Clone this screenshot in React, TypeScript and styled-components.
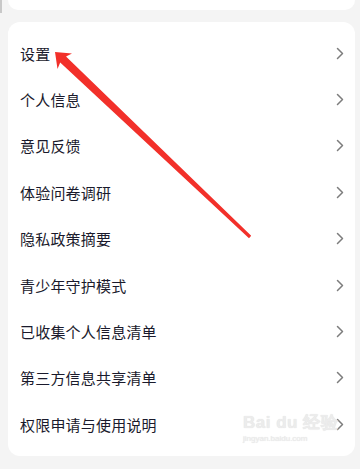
import React from "react";
import styled, { createGlobalStyle } from "styled-components";

const GlobalStyle = createGlobalStyle`
  html, body {
    margin: 0;
    padding: 0;
    background: #f4f4f4;
  }
  body {
    font-family: "Noto Sans CJK SC", "Noto Sans", sans-serif;
  }
`;

const Page = styled.div`
  position: relative;
  width: 360px;
  height: 469px;
  overflow: hidden;
  background: #f4f4f4;
  padding: 0 5px 0 8px;
  box-sizing: border-box;
  display: flex;
  flex-direction: column;
  gap: 12px;
`;

const ScrollMark = styled.div`
  position: absolute;
  left: 0;
  top: 0;
  width: 2px;
  height: 13px;
  background: #c8c8c8;
`;

const TopCard = styled.div`
  height: 10px;
  background: #ffffff;
  border-radius: 0 0 12px 12px;
`;

const Card = styled.div`
  background: #ffffff;
  border-radius: 12px;
  padding: 8px 0;
  display: flex;
  flex-direction: column;
`;

const Row = styled.div`
  height: 46.4px;
  display: flex;
  align-items: center;
  justify-content: space-between;
  padding: 0 11px 0 12px;
`;

const Label = styled.span`
  font-size: 15px;
  color: #1a1a2c;
  letter-spacing: 0.2px;
`;

const Chevron = () => (
  <svg width="8" height="13" viewBox="0 0 8 13" fill="none">
    <path d="M1.5 1.5 L6.5 6.5 L1.5 11.5" stroke="#7d7d7d" strokeWidth="1.5" strokeLinecap="round" strokeLinejoin="round" />
  </svg>
);

const Overlay = styled.svg`
  position: absolute;
  left: 0;
  top: 0;
  pointer-events: none;
`;

const Watermark = styled.div`
  position: absolute;
  left: 243px;
  top: 414px;
  color: #ececec;
  font-family: "Liberation Sans", sans-serif;
  text-shadow: 0 0 1px #dcdcdc;
  line-height: 1;
`;

const MarkBig = styled.div`
  font-size: 17px;
  font-weight: bold;
  letter-spacing: 0.5px;
`;

const MarkSmall = styled.div`
  font-size: 8px;
  margin-top: 4px;
`;

const items = [
  "设置",
  "个人信息",
  "意见反馈",
  "体验问卷调研",
  "隐私政策摘要",
  "青少年守护模式",
  "已收集个人信息清单",
  "第三方信息共享清单",
  "权限申请与使用说明",
];

export default function App() {
  return (
    <>
      <GlobalStyle />
      <Page>
        <ScrollMark />
        <TopCard />
        <Card>
          {items.map((t) => (
            <Row key={t}>
              <Label>{t}</Label>
              <Chevron />
            </Row>
          ))}
        </Card>
        <Watermark>
          <MarkBig>Bai du 经验</MarkBig>
          <MarkSmall>jingyan.baidu.com</MarkSmall>
        </Watermark>
        <Overlay width="360" height="469" viewBox="0 0 360 469">
          <polygon
            points="55,52 72,53.5 66,56.6 251.2,235.8 249,238.2 60.2,62.5 57.5,69"
            fill="#f2302a"
          />
        </Overlay>
      </Page>
    </>
  );
}
